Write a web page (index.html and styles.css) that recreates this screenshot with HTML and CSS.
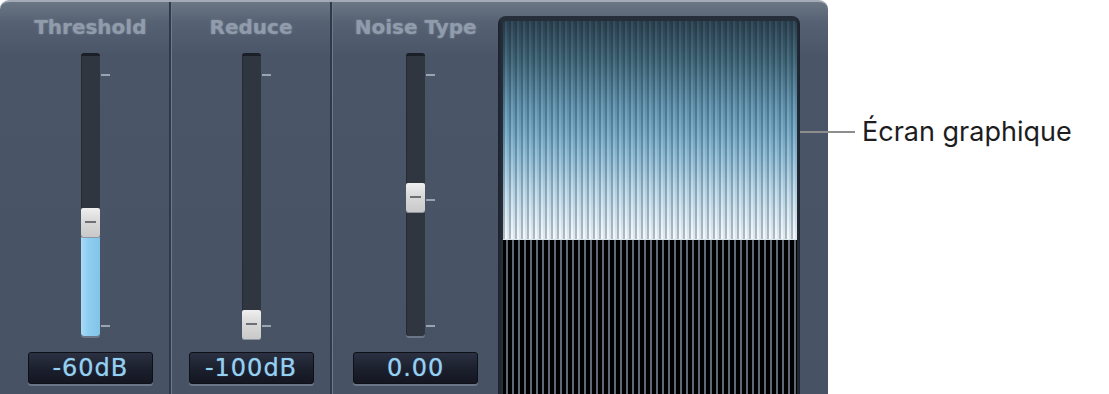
FILE: index.html
```html
<!DOCTYPE html>
<html lang="fr">
<head>
    <meta charset="UTF-8">
    <meta name="viewport" content="width=device-width, initial-scale=1.0">
    <title>Denoiser</title>
    <link rel="stylesheet" href="styles.css">
</head>
<body>
    <div class="page">
        <div class="panel">
            <div class="col col-threshold sep">
                <div class="label">Threshold</div>
                <div class="track">
                    <span class="tick" style="top: 18px"></span>
                    <span class="tick" style="top: 269px"></span>
                    <div class="fill" style="top: 181px"></div>
                    <div class="knob" style="top: 152px"></div>
                </div>
                <div class="value">-60dB</div>
            </div>
            <div class="col col-reduce sep">
                <div class="label">Reduce</div>
                <div class="track">
                    <span class="tick" style="top: 18px"></span>
                    <span class="tick" style="top: 269px"></span>
                    <div class="knob" style="top: 254px"></div>
                </div>
                <div class="value">-100dB</div>
            </div>
            <div class="col col-noise">
                <div class="label">Noise Type</div>
                <div class="track">
                    <span class="tick" style="top: 18px"></span>
                    <span class="tick" style="top: 143px"></span>
                    <span class="tick" style="top: 269px"></span>
                    <div class="knob" style="top: 127px"></div>
                </div>
                <div class="value">0.00</div>
            </div>
            <div class="display">
                <div class="screen">
                    <div class="upper"></div>
                    <div class="lower"></div>
                </div>
            </div>
        </div>
        <div class="callout">
            <span class="line"></span>
            <span class="callout-text">Écran graphique</span>
        </div>
    </div>
</body>
</html>
```
FILE: styles.css
```css
body {
    margin: 0;
    padding: 0;
    background-color: #ffffff;
    overflow: hidden;
}

.page {
    display: flex;
    align-items: flex-start;
    height: 394px;
    overflow: hidden;
}

/* Panneau du plug-in */
.panel {
    display: flex;
    width: 828px;
    height: 410px;
    padding-right: 28px;
    box-sizing: border-box;
    border-radius: 9px 9px 0 0;
    border-top: 2px solid #a4abb6;
    background: linear-gradient(#6b7684 0, #566273 20px, #4a5667 55px, #475365 100%);
    flex-shrink: 0;
}

.col {
    display: flex;
    flex-direction: column;
    align-items: center;
    box-sizing: border-box;
    padding-top: 12px;
}

.col-threshold {
    width: 171px;
    padding-left: 12px;
}

.col-reduce {
    width: 161px;
    margin-left: 1px;
}

.col-noise {
    width: 165px;
    margin-left: 1px;
}

.sep {
    border-right: 2px solid #2f3947;
    box-shadow: 1px 0 0 #6f7b8b;
}

.label {
    font-family: "DejaVu Sans", sans-serif;
    font-weight: bold;
    font-size: 20px;
    line-height: 26px;
    color: #909bab;
    text-shadow: 0 0 2px rgba(150, 162, 178, 0.7);
}

.track {
    position: relative;
    width: 19px;
    height: 283px;
    margin-top: 13px;
    box-sizing: border-box;
    border-radius: 3px;
    border-top: 3px solid #1b1f27;
    background-color: #30363f;
    box-shadow: inset 1px 0 0 #262b33, 0 2px 0 #6c7686;
}

.tick {
    position: absolute;
    left: 20px;
    width: 9px;
    height: 2px;
    background-color: #9aa4b1;
}

.fill {
    position: absolute;
    left: 0;
    right: 0;
    bottom: 0;
    border-radius: 0 0 3px 3px;
    background: linear-gradient(90deg, #a9dcf6, #8dcdf0 40%, #82c4e8);
}

.knob {
    position: absolute;
    left: 0;
    width: 19px;
    height: 29px;
    border-radius: 2px;
    background: linear-gradient(#efefef, #d9d9d9 45%, #c9c9c9);
    box-shadow: 0 1px 0 #8e96a2;
}

.knob::after {
    content: "";
    position: absolute;
    left: 4px;
    right: 4px;
    top: 13px;
    height: 2px;
    background-color: #6c6f74;
}

.value {
    width: 125px;
    height: 32px;
    margin-top: 16px;
    box-sizing: border-box;
    border: 1px solid #0d1016;
    border-radius: 3px;
    background: linear-gradient(#2b3142, #1a1e2b 60%, #141722);
    box-shadow: 0 2px 0 #6a7585;
    text-align: center;
    font-family: "DejaVu Sans", sans-serif;
    font-size: 24px;
    line-height: 30px;
    letter-spacing: 1px;
    color: #94d0f2;
    text-shadow: 0 0 1px rgba(148, 208, 242, 0.6);
}

/* Écran graphique */
.display {
    width: 302px;
    margin-top: 14px;
    padding: 5px 3px 0 5px;
    box-sizing: border-box;
    border-radius: 8px 8px 0 0;
    background: linear-gradient(90deg, #1c222c, #262e3a 4px, #262e3a 298px, #1c222c);
    flex-shrink: 0;
}

.screen {
    height: 400px;
    display: flex;
    flex-direction: column;
    border-radius: 4px 4px 0 0;
    overflow: hidden;
}

.upper {
    height: 218px;
    background:
        repeating-linear-gradient(90deg, rgba(20, 40, 55, 0.3) 0 2px, rgba(255, 255, 255, 0.05) 2px 4px, rgba(20, 40, 55, 0.08) 4px 6px),
        linear-gradient(#2b4150 0, #416779 40px, #6396b2 85px, #76abc8 110px, #92c0da 135px, #c6e0ef 175px, #f3f9fd 218px);
    border-bottom: 1px solid #d8e6ee;
}

.lower {
    flex: 1;
    background: repeating-linear-gradient(90deg, #000 0 3px, #5f6975 3px 5px, #000 5px 6px);
}

/* Légende */
.callout {
    position: relative;
    display: flex;
    align-items: center;
    margin-left: -28px;
    margin-top: 118px;
}

.line {
    width: 55px;
    height: 2px;
    background-color: #8d8d8d;
}

.callout-text {
    margin-left: 7px;
    font-family: Inter, "Noto Sans", sans-serif;
    font-size: 27px;
    line-height: 28px;
    color: #1d1d1f;
    white-space: nowrap;
}
```
